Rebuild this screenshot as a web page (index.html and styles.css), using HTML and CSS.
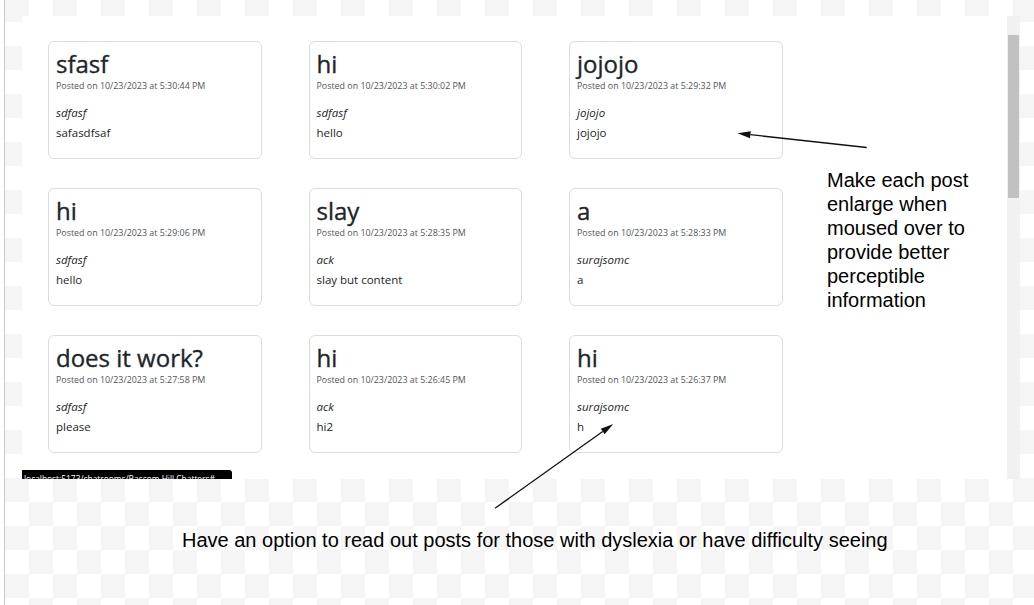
FILE: index.html
```html
<!DOCTYPE html>
<html lang="en">
<head>
<meta charset="utf-8">
<title>Chatroom posts – annotated</title>
<link rel="stylesheet" href="styles.css">
</head>
<body>
<div class="canvas">
  <div class="shot">
    <div class="viewport">
      <div class="grid">
        <div class="card">
          <h3 class="title">sfasf</h3>
          <p class="meta">Posted on 10/23/2023 at 5:30:44 PM</p>
          <p class="author">sdfasf</p>
          <p class="text">safasdfsaf</p>
        </div>
        <div class="card">
          <h3 class="title">hi</h3>
          <p class="meta">Posted on 10/23/2023 at 5:30:02 PM</p>
          <p class="author">sdfasf</p>
          <p class="text">hello</p>
        </div>
        <div class="card">
          <h3 class="title">jojojo</h3>
          <p class="meta">Posted on 10/23/2023 at 5:29:32 PM</p>
          <p class="author">jojojo</p>
          <p class="text">jojojo</p>
        </div>
        <div class="card">
          <h3 class="title">hi</h3>
          <p class="meta">Posted on 10/23/2023 at 5:29:06 PM</p>
          <p class="author">sdfasf</p>
          <p class="text">hello</p>
        </div>
        <div class="card">
          <h3 class="title">slay</h3>
          <p class="meta">Posted on 10/23/2023 at 5:28:35 PM</p>
          <p class="author">ack</p>
          <p class="text">slay but content</p>
        </div>
        <div class="card">
          <h3 class="title">a</h3>
          <p class="meta">Posted on 10/23/2023 at 5:28:33 PM</p>
          <p class="author">surajsomc</p>
          <p class="text">a</p>
        </div>
        <div class="card">
          <h3 class="title">does it work?</h3>
          <p class="meta">Posted on 10/23/2023 at 5:27:58 PM</p>
          <p class="author">sdfasf</p>
          <p class="text">please</p>
        </div>
        <div class="card">
          <h3 class="title">hi</h3>
          <p class="meta">Posted on 10/23/2023 at 5:26:45 PM</p>
          <p class="author">ack</p>
          <p class="text">hi2</p>
        </div>
        <div class="card">
          <h3 class="title">hi</h3>
          <p class="meta">Posted on 10/23/2023 at 5:26:37 PM</p>
          <p class="author">surajsomc</p>
          <p class="text">h</p>
        </div>
      </div>
      <div class="status">localhost:5173/chatrooms/Bascom Hill Chatters#</div>
    </div>
    <div class="scrollbar"><div class="thumb"></div></div>
  </div>
  <p class="caption">Have an option to read out posts for those with dyslexia or have difficulty seeing</p>
  <p class="note">Make each post enlarge when moused over to provide better perceptible information</p>
  <svg class="arrows" width="1034" height="605" viewBox="0 0 1034 605" aria-hidden="true">
    <line x1="866.7" y1="147.5" x2="750.4" y2="134.7" stroke="#111" stroke-width="1.3"/>
    <polygon points="737.5,133.3 750.8,131.2 750.0,138.2" fill="#111"/>
    <line x1="495" y1="508.3" x2="602.7" y2="431.5" stroke="#111" stroke-width="1.3"/>
    <polygon points="613.3,424 604.6,434.2 600.8,428.8" fill="#111"/>
  </svg>
</div>
</body>
</html>
```
FILE: styles.css
```css
html, body {
  margin: 0;
  padding: 0;
  background: #fff;
}

.canvas {
  position: relative;
  width: 1034px;
  height: 605px;
  box-sizing: border-box;
  padding: 16px 0 0 22px;
  overflow: hidden;
  background-image:
    linear-gradient(to right, #fff 0 4px, #c9c9c9 4px 5px, transparent 5px),
    conic-gradient(#fff 25%, #f5f5f5 0 50%, #fff 0 75%, #f5f5f5 0);
  background-size: 100% 100%, 48px 48px;
  background-position: 0 0, 5px -2px;
  background-repeat: no-repeat, repeat;
}

.shot {
  width: 998px;
  height: 463px;
  background: #fff;
  display: flex;
}

.viewport {
  flex: 1;
  position: relative;
  padding: 25px 0 0 26px;
  overflow: hidden;
}

.grid {
  display: grid;
  grid-template-columns: repeat(3, 213.5px);
  grid-auto-rows: 118px;
  column-gap: 47px;
  row-gap: 29px;
}

.card {
  box-sizing: border-box;
  border: 1px solid #dcdcdc;
  border-radius: 6px;
  padding: 8px 7px 0;
  font-family: "Open Sans", "Noto Sans", sans-serif;
  color: #212529;
}

.card p,
.card h3 {
  margin: 0;
}

.title {
  font-size: 24px;
  line-height: 28px;
  font-weight: 500;
  -webkit-text-stroke: 0.35px #212529;
}

.meta {
  font-size: 8.9px;
  line-height: 16px;
  color: #50545a;
}

.author {
  margin-top: 9px !important;
  font-size: 11.5px;
  line-height: 20px;
  font-style: italic;
}

.text {
  font-size: 11.5px;
  line-height: 20px;
}

.status {
  position: absolute;
  left: 0;
  bottom: 0;
  width: 210px;
  height: 9px;
  box-sizing: border-box;
  padding: 1px 0 0 2px;
  background: #000;
  color: #fff;
  border-radius: 0 3px 0 0;
  font-family: "Open Sans", sans-serif;
  font-size: 8.4px;
  line-height: 15px;
  white-space: nowrap;
  overflow: hidden;
}

.scrollbar {
  width: 13px;
  box-sizing: border-box;
  padding: 19px 1px 0;
  background: #f1f1f1;
}

.thumb {
  height: 163px;
  background: #c1c1c1;
}

.caption {
  margin: 48.8px 0 0;
  padding-left: 160px;
  font-family: "Liberation Sans", Arial, sans-serif;
  font-size: 20px;
  line-height: 24px;
  color: #000;
  white-space: nowrap;
}

.note {
  position: absolute;
  left: 827px;
  top: 167.8px;
  width: 160px;
  margin: 0;
  font-family: "Liberation Sans", Arial, sans-serif;
  font-size: 20px;
  line-height: 24px;
  color: #000;
}

.arrows {
  position: absolute;
  left: 0;
  top: 0;
  pointer-events: none;
}
```
